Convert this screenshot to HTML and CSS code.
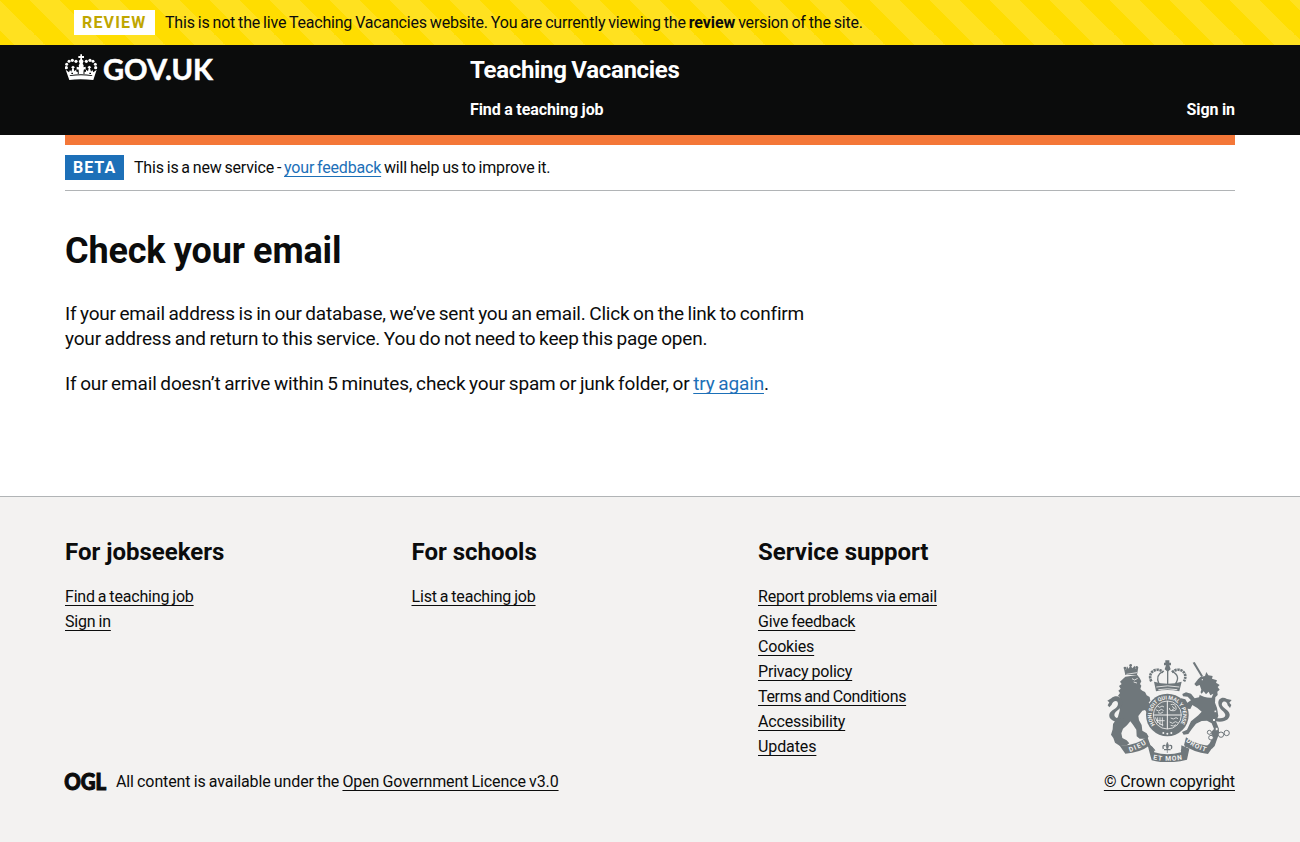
FILE: index.html
```html
<!DOCTYPE html>
<html lang="en">
<head>
<meta charset="utf-8">
<title>Check your email - Teaching Vacancies - GOV.UK</title>
<link rel="stylesheet" href="styles.css">
</head>
<body>
<div class="review-banner">
  <div class="review-inner">
    <strong class="tag tag-review">REVIEW</strong>
    <span class="review-text">This is not the live Teaching Vacancies website. You are currently viewing the <b>review</b> version of the site.</span>
  </div>
</div>
<header class="header">
  <div class="width-container header-inner">
    <a class="logo" href="#" aria-label="GOV.UK">
      <svg width="160" height="32" viewBox="0 0 480 96" fill="#fff">
        <g transform="translate(-15 -8)">
          <path d="M61 12h5v5h6v6h-6v4l5 5-3 8 3 5-2 6H58l-2-6 3-5-3-8 5-5v-4h-6v-6h6z"/>
          <circle cx="48" cy="33" r="4.8"/><circle cx="37" cy="30" r="4.8"/><circle cx="27" cy="33" r="4.5"/><circle cx="20" cy="42" r="4.5"/><circle cx="19" cy="52" r="4.8"/>
          <circle cx="79" cy="33" r="4.8"/><circle cx="90" cy="30" r="4.8"/><circle cx="99" cy="33" r="4.5"/><circle cx="106" cy="42" r="4.5"/><circle cx="107" cy="52" r="4.8"/>
          <path d="M17 58l10 8 3-7 4 5 3-10-4-3 6-5 6 5-4 3 2 9 5-5 2 7 7-1-2-7-5 1 0-9 6 2 2-6h11l2 6 6-2v9l-5-1-2 7 7 1 2-7 5 5 2-9-4-3 6-5 6 5-4 3 3 10 4-5 3 7 10-8-10 31q-41-5-72 0z" fill-rule="evenodd"/>
          <path d="M29 75q34-6 68 0l-1 2q-33-5-66 0z" fill="#0b0c0c"/>
          <path d="M34 69l5 0M53 68l4 0M70 68l4 0M88 69l5 0" stroke="#0b0c0c" stroke-width="4"/>
        </g>
        <text class="logo-text" x="114" y="81" textLength="330" lengthAdjust="spacingAndGlyphs">GOV.UK</text>
      </svg>
    </a>
    <div class="header-content">
      <a class="service-name" href="#">Teaching Vacancies</a>
      <nav class="nav"><a href="#">Find a teaching job</a><a href="#">Sign in</a></nav>
    </div>
  </div>
</header>
<div class="width-container content">
  <div class="phase">
    <strong class="tag tag-beta">BETA</strong>
    <span class="phase-text">This is a new service - <a class="link" href="#">your feedback</a> will help us to improve it.</span>
  </div>
  <main class="main">
    <h1>Check your email</h1>
    <p><span class="line-a">If your email address is in our database, we’ve sent you an email. Click on the link to confirm</span><br><span class="line-b">your address and return to this service. You do not need to keep this page open.</span></p>
    <p><span class="line-c">If our email doesn’t arrive within 5 minutes, check your spam or junk folder, or <a class="link" href="#">try again</a>.</span></p>
  </main>
</div>
<footer class="footer">
  <div class="width-container footer-inner">
    <div class="footer-columns">
      <section><h2>For jobseekers</h2><ul><li><a href="#">Find a teaching job</a></li><li><a href="#">Sign in</a></li></ul></section>
      <section><h2>For schools</h2><ul><li><a href="#">List a teaching job</a></li></ul></section>
      <section><h2>Service support</h2><ul><li><a href="#">Report problems via email</a></li><li><a href="#">Give feedback</a></li><li><a href="#">Cookies</a></li><li><a href="#">Privacy policy</a></li><li><a class="terms" href="#">Terms and Conditions</a></li><li><a href="#">Accessibility</a></li><li><a class="updates" href="#">Updates</a></li></ul></section>
    </div>
    <div class="footer-meta">
      <div class="licence">
        <svg class="ogl" width="41" height="18" viewBox="0 0 41 18"><text class="ogl-text" x="-0.8" y="16.6" textLength="42" lengthAdjust="spacingAndGlyphs">OGL</text></svg>
        <span class="licence-text">All content is available under the <a href="#">Open Government Licence v3.0</a></span>
      </div>
      <div class="copyright">
        <svg class="crest" width="125" height="102" viewBox="36 30 375 306">
          <defs>
            <path id="garter" d="M180 224A47 47 0 1 1 254 224"/>
            <path id="dieu" d="M104 306Q137 296 162 276"/>
            <path id="etmon" d="M174 328Q218 337 264 328"/>
            <path id="droit" d="M272 274Q298 297 338 307"/>
          </defs>
          <g fill="#6f777b">
            <path d="M86 52l7 7 3-10 5 7 5-11 6 10 7-8 3 9 8-5-4 24H91z"/>
            <circle cx="107" cy="46" r="4"/><circle cx="90" cy="54" r="4"/><circle cx="125" cy="52" r="4"/>
            <path d="M91 80l36-5 7 9 5 10-4 8 4 5-3 10 6 5 8 4 5 10 9 5 2 12-5 4 5 8-3 7 2 8-9 8-6-8-8 2-12 16 2 13 8 14 2 17 13 8 6 10-5 6h-22l-9-7-1-20-10-15-8-10-10 12-12 10-5 14 3 14 13 7 8 9-8 6-20 2-15-10-5-14-7-10 5-16 1-16 15-22 5-18 1-16-4-13 4-11-6-5 6-8-5-7 7-6-5-8 8-6-5-7z"/>
            <path d="M83 218C57 218 40 208 43 193C46 178 69 177 69 161C68 148 53 153 50 164L43 172L38 166L43 157L37 152L49 145C62 134 79 139 83 155C84 178 58 180 58 195C59 205 73 207 87 206z"/>
            <path d="M293 38l6-2 25 42-5 3z"/>
            <path d="M316 81L330 78L334 66L340 76L353 78L351 86L366 91L363 98L374 105L368 111L374 119L367 125L368 135L361 142L360 158L366 174L370 198L363 214L370 232L373 250L366 268L359 288L351 296L331 293L344 280L352 264L348 247L357 237L350 220L336 212L320 213L303 221L290 238L280 252L266 254L261 246L276 239L288 214L310 196L320 185L307 174L292 165L286 177L276 176L270 165L260 160L253 152L258 145L271 148L277 158L288 151L278 140L264 139L262 132L273 127L288 131L299 145L312 142L319 119L314 105L304 109L298 102L309 88z"/>
            <path d="M361 214C391 219 405 207 404 193C402 178 376 172 381 160C384 151 397 153 398 166L405 174L409 165L403 158L410 150L396 147C383 138 369 145 370 160C371 180 390 184 391 195C391 205 376 207 361 203z"/>
            <circle cx="217" cy="195" r="64"/>
            <path d="M177 95L183 124Q217 116 253 124L260 95Q219 107 177 95z"/>
            <path d="M211 31h12v7h5v8h-5l4 12-9 7-9-7 4-12h-6v-8h4z"/>
            <path d="M73 286Q119 289 157 260L166 285Q134 309 91 311zM273 262Q304 286 355 289L339 312Q295 307 267 286zM158 286Q176 285 178 307Q217 319 258 307L259 286L283 296L276 329Q217 344 170 331L164 309z"/>
          </g>
          <path d="M169 94C155 67 185 48 205 67M231 67C251 48 282 66 267 94" fill="none" stroke="#6f777b" stroke-width="8" stroke-dasharray="7 2"/>
          <path d="M192 102Q180 76 203 65M241 102Q258 78 232 65M218 61V109" fill="none" stroke="#6f777b" stroke-width="4"/>
          <path d="M184 111Q217 104 253 111M190 119Q217 114 247 119M94 73l32-5M111 86l8 4 9-5M116 96l10 3" fill="none" stroke="#f3f2f1" stroke-width="2.5"/>
          <circle cx="217" cy="195" r="42" fill="none" stroke="#f3f2f1" stroke-width="2.5"/>
          <path d="M217 153v84M175 195h84" fill="none" stroke="#f3f2f1" stroke-width="3"/>
          <g fill="none" stroke="#f3f2f1" stroke-width="2.4">
            <path d="M187 168l7 4 7-4 6 3M182 179l9 4 8-5 7 4M189 188l8 2 7-4M227 164q13-4 16 8t-12 10q-8 1-8-8M231 169l8 6-8 5M181 202q8 22 24 23M188 202v17M195 202v23M202 202v27M183 212h26M227 204l8 3 8-4 6 3M224 216l9 4 8-5 7 3M227 226l8 2 8-4"/>
          </g>
          <g fill="#f3f2f1">
            <path d="M312 122l8 9 6-7 7 9 8-8 5 11 9-5-5 12q-23 1-41-12z"/>
            <circle cx="322" cy="89" r="2"/>
            <circle cx="205" cy="249" r="3"/><circle cx="217" cy="251" r="3"/><circle cx="229" cy="249" r="3"/>
          </g>
          <g fill="#f3f2f1" stroke="#6f777b" stroke-width="3">
            <circle cx="343" cy="247" r="6"/><circle cx="348" cy="263" r="7"/><circle cx="378" cy="254" r="8"/><circle cx="395" cy="249" r="8"/><circle cx="361" cy="184" r="4"/><circle cx="357" cy="210" r="5"/><circle cx="365" cy="237" r="5"/>
          </g>
          <g fill="none" stroke="#6f777b" stroke-width="4">
            <path d="M180 302q-17-18-20-19M258 302q12-13 26-18M205 297q-4-14 6-10M229 297q4-14-6-10M207 299h20"/>
            <path d="M217 277l-4 10 4 14 4-14zM217 301v8" fill="#6f777b" stroke-width="2"/>
          </g>
          <g class="crest-text">
            <text><textPath href="#garter" textLength="205">HONI SOIT QUI MAL Y PENSE</textPath></text>
            <g class="ribbon-text">
              <text><textPath href="#dieu" textLength="56">DIEU</textPath></text>
              <text><textPath href="#etmon" textLength="88">ET MON</textPath></text>
              <text><textPath href="#droit" textLength="68">DROIT</textPath></text>
            </g>
          </g>
        </svg>
        <a class="crown-link" href="#">© Crown copyright</a>
      </div>
    </div>
  </div>
</footer>
</body>
</html>
```
FILE: styles.css
```css
* { box-sizing: border-box; }
body { margin: 0; background: #fff; color: #0b0c0c; font: 16px/20px Roboto, "Open Sans", sans-serif; }
a { color: inherit; text-decoration-thickness: 1px; text-underline-offset: 3px; text-decoration-skip-ink: none; }
.width-container { width: 1170px; margin: 0 auto; }
.review-banner { height: 45px; padding: 10px 0 10px 74px; background-color: #fd0; background-image: linear-gradient(45deg, rgba(255,255,255,.125) 25%, transparent 25%, transparent 50%, rgba(255,255,255,.125) 50%, rgba(255,255,255,.125) 75%, transparent 75%); background-size: 60px 60px; background-position: 30px 0; color: #0b0c0c; }
.review-inner, .phase { display: flex; align-items: center; gap: 10px; }
.tag { display: block; height: 25px; padding: 0 8px; line-height: 25px; font-weight: 700; letter-spacing: 1px; white-space: nowrap; }
.tag-review { width: 81px; background: #fff; color: #bfa600; letter-spacing: 1.15px; }
.tag-beta { width: 59px; background: #1d70b8; color: #fff; }
.review-text, .phase-text { white-space: nowrap; }
.review-text { letter-spacing: -.2px; word-spacing: -.75px; }
.review-text b { letter-spacing: -.1px; }
.phase-text { letter-spacing: -.18px; word-spacing: -.9px; }
.header { height: 90px; background: #0b0c0c; color: #fff; }
.header a { color: #fff; text-decoration: none; }
.header-inner { display: grid; grid-template-columns: 405px 1fr; height: 100px; padding-top: 8px; border-bottom: 10px solid #f47738; }
.logo svg { display: block; }
.logo-text { font: 700 85px Lato, sans-serif; stroke: #fff; stroke-width: 1.5px; }
.service-name { display: block; font-size: 24px; line-height: 34px; font-weight: 700; letter-spacing: -.3px; word-spacing: -1px; }
.nav { display: flex; justify-content: space-between; margin-top: 13px; font-weight: 700; letter-spacing: -.08px; word-spacing: -.3px; }
.content { padding-top: 10px; }
.phase { height: 46px; padding: 10px 0; border-bottom: 1px solid #b1b4b6; }
.link { color: #1d70b8; }
.main { height: 305px; padding-top: 40px; }
h1 { margin: 0 0 30px; font-size: 36px; line-height: 40px; letter-spacing: -.15px; word-spacing: -.4px; }
p { margin: 0 0 20px; font-size: 19px; line-height: 25px; white-space: nowrap; }
.line-a { letter-spacing: -.19px; word-spacing: -.9px; }
.line-b { letter-spacing: -.17px; word-spacing: -.9px; }
.line-c { letter-spacing: -.15px; word-spacing: -.9px; }
.footer { height: 346px; padding-top: 40px; border-top: 1px solid #b1b4b6; background: #f3f2f1; }
.footer-columns { display: grid; grid-template-columns: repeat(3, 346.5px); height: 222px; }
h2 { margin: 0 0 20px; font-size: 24px; line-height: 30px; }
ul { margin: 0; padding: 0; list-style: none; letter-spacing: -.18px; word-spacing: -.8px; }
li { height: 20px; margin-bottom: 5px; }
.terms { letter-spacing: -.32px; }
.updates { letter-spacing: -.1px; }
.footer-meta { display: flex; justify-content: space-between; align-items: flex-end; margin-top: -99px; }
.licence { display: flex; align-items: center; gap: 10px; }
.licence-text { letter-spacing: -.11px; word-spacing: -.65px; }
.ogl { overflow: visible; }
.ogl-text { font: 900 22.5px Lato, sans-serif; fill: #0b0c0c; stroke: #0b0c0c; stroke-width: 1.1px; }
.copyright { display: flex; flex-direction: column; align-items: flex-end; gap: 10px; }
.crown-link { letter-spacing: -.08px; }
.crest { margin-right: 3px; }
.crest-text { font: 700 16px Roboto, sans-serif; fill: #f3f2f1; }
.ribbon-text { font-size: 20px; }
```
